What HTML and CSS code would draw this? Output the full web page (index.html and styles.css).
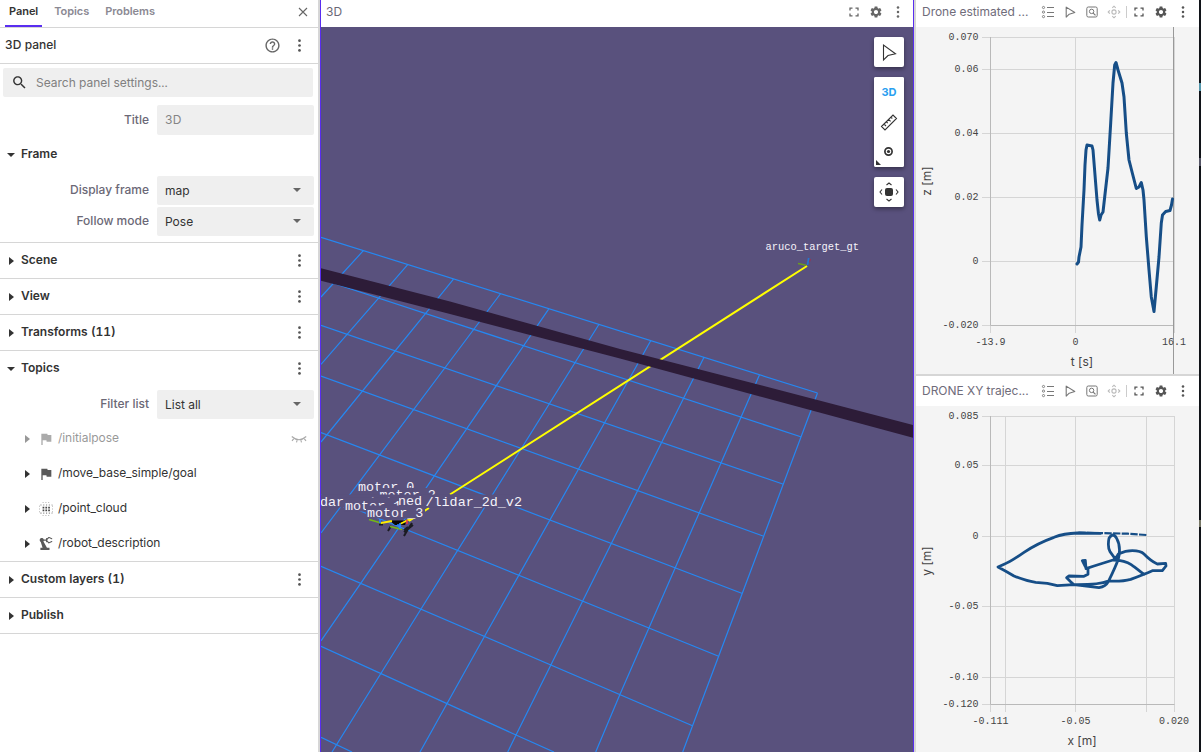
FILE: index.html
```html
<!DOCTYPE html>
<html lang="en">
<head>
<meta charset="utf-8">
<title>3D panel</title>
<link rel="stylesheet" href="styles.css">
</head>
<body>
<svg class="defs" width="0" height="0">
  <symbol id="dots" viewBox="0 0 16 16"><circle cx="8" cy="2.800" r="1.450"/><circle cx="8" cy="8" r="1.450"/><circle cx="8" cy="13.200" r="1.450"/></symbol>
  <symbol id="gear" viewBox="0 0 24 24"><path d="M19.14 12.94c.04-.3.06-.61.06-.94 0-.32-.02-.64-.07-.94l2.03-1.58c.18-.14.23-.41.12-.61l-1.92-3.32c-.12-.22-.37-.29-.59-.22l-2.39.96c-.5-.38-1.03-.7-1.62-.94l-.36-2.54c-.04-.24-.24-.41-.48-.41h-3.84c-.24 0-.43.17-.47.41l-.36 2.54c-.59.24-1.13.57-1.62.94l-2.39-.96c-.22-.08-.47 0-.59.22L2.74 8.87c-.12.21-.08.47.12.61l2.03 1.58c-.05.3-.09.63-.09.94s.02.64.07.94l-2.03 1.58c-.18.14-.23.41-.12.61l1.92 3.32c.12.22.37.29.59.22l2.39-.96c.5.38 1.03.7 1.62.94l.36 2.54c.05.24.24.41.48.41h3.84c.24 0 .44-.17.47-.41l.36-2.54c.59-.24 1.13-.56 1.62-.94l2.39.96c.22.08.47 0 .59-.22l1.92-3.32c.12-.22.07-.47-.12-.61l-2.01-1.58zM12 15.6c-1.98 0-3.6-1.62-3.6-3.6s1.62-3.6 3.6-3.6 3.6 1.62 3.6 3.6-1.62 3.6-3.6 3.6z"/></symbol>
  <symbol id="full" viewBox="0 0 14 14"><path d="M3 5.5V3.2h2.500M8.500 3.200H11v2.300M11 8.500v2.400H8.500M5.500 10.900H3V8.500" fill="none" stroke="currentColor" stroke-width="1.300"/></symbol>
  <symbol id="legend" viewBox="0 0 14 14"><g fill="none" stroke="currentColor"><path d="M6 2.500h7M6 7.500h7M6 11.500h7" stroke-width="1"/><circle cx="2.500" cy="2.500" r="1.100" stroke-width=".9"/><circle cx="2.500" cy="7.100" r="1.100" stroke-width=".9"/><circle cx="2.500" cy="11.600" r="1.100" stroke-width=".9"/></g></symbol>
  <symbol id="cursor" viewBox="0 0 14 14"><path d="M3.200 2.100v10l3-2.900 5.600-1.700z" fill="none" stroke="currentColor" stroke-width="1.100" stroke-linejoin="round"/></symbol>
  <symbol id="zoom" viewBox="0 0 14 14"><g fill="none" stroke="currentColor" stroke-width="1"><rect x="1.800" y="2" width="10.400" height="10" rx="1.500"/><circle cx="6.600" cy="6.400" r="2.200"/><path d="M8.200 8.100l2.300 2.300" stroke-width="1.200"/></g></symbol>
  <symbol id="center" viewBox="0 0 14 14"><g fill="none" stroke="currentColor" stroke-width="1.100"><circle cx="7" cy="7" r="2.100"/><path d="M5.300 2.800 7 1.200l1.700 1.600M5.300 11.200 7 12.800l1.700-1.600M2.800 5.300 1.200 7l1.600 1.700M11.200 5.300 12.800 7l-1.600 1.700"/></g></symbol>
  <symbol id="flag" viewBox="0 0 24 24"><path d="M14.400 6 14 4H5v17h2v-7h5.600l.4 2h7V6z"/></symbol>
</svg>

<div class="app">
  <aside class="sidebar">
    <nav class="tabs">
      <span class="tab active">Panel</span><span class="tab">Topics</span><span class="tab">Problems</span>
      <svg class="close" viewBox="0 0 10 10"><path d="M1 1l8 8M9 1L1 9"/></svg>
    </nav>
    <div class="panel-head"><span>3D panel</span>
      <svg class="help" viewBox="0 0 24 24"><path d="M11 18h2v-2h-2v2zm1-16C6.480 2 2 6.480 2 12s4.480 10 10 10 10-4.480 10-10S17.520 2 12 2zm0 18c-4.410 0-8-3.590-8-8s3.590-8 8-8 8 3.590 8 8-3.590 8-8 8zm0-14c-2.210 0-4 1.790-4 4h2c0-1.100.9-2 2-2s2 .9 2 2c0 2-3 1.750-3 5h2c0-2.250 3-2.500 3-5 0-2.210-1.790-4-4-4z"/></svg>
      <svg class="more"><use href="#dots"/></svg></div>
    <div class="general">
      <div class="search"><svg viewBox="0 0 24 24"><path d="M15.500 14h-.79l-.28-.27C15.410 12.590 16 11.110 16 9.500 16 5.910 13.090 3 9.500 3S3 5.910 3 9.500 5.910 16 9.500 16c1.610 0 3.090-.59 4.230-1.570l.27.28v.79l5 4.990L20.490 19l-4.990-5zm-6 0C7.010 14 5 11.990 5 9.500S7.010 5 9.500 5 14 7.010 14 9.500 11.990 14 9.500 14z"/></svg><span>Search panel settings...</span></div>
      <div class="field title-field"><label>Title</label><div class="input">3D</div></div>
      <div class="section-head open"><i class="tri down"></i><b>Frame</b></div>
      <div class="field frame-field"><label>Display frame</label><div class="select">map<i></i></div></div>
      <div class="field"><label>Follow mode</label><div class="select">Pose<i></i></div></div>
    </div>
    <div class="section-head"><i class="tri"></i><b>Scene</b><svg class="more"><use href="#dots"/></svg></div>
    <div class="section-head"><i class="tri"></i><b>View</b><svg class="more"><use href="#dots"/></svg></div>
    <div class="section-head"><i class="tri"></i><b>Transforms (11)</b><svg class="more"><use href="#dots"/></svg></div>
    <div class="topics">
      <div class="section-head open"><i class="tri down"></i><b>Topics</b><svg class="more"><use href="#dots"/></svg></div>
      <div class="field frame-field"><label>Filter list</label><div class="select">List all<i></i></div></div>
      <div class="topic off"><i class="tri"></i><svg><use href="#flag"/></svg><span>/initialpose</span>
        <svg class="eye" viewBox="0 0 16 8"><path d="M.8 1.500Q8 8 15.200 1.500M3 3.300 1 5.800M6.200 4.900 5.500 7.300M9.800 4.900l.7 2.400M13 3.300l2 2.500"/></svg></div>
      <div class="topic"><i class="tri"></i><svg><use href="#flag"/></svg><span>/move_base_simple/goal</span></div>
      <div class="topic"><i class="tri"></i><svg viewBox="0 0 16 16"><g class="grain"><path class="g1" d="M4.600 1.500h8M4.600 14.500h8M1 5.200h1M1 8h1M1 10.800h1M14 5.200h1M14 8h1M14 10.800h1"/><path class="g2" d="M2.400 4h12M2.400 12.200h12"/><path class="g3" d="M4.600 6.700h8M4.600 9.400h8"/></g></svg><span>/point_cloud</span></div>
      <div class="topic"><i class="tri"></i><svg class="arm" viewBox="2 3 20 19"><path d="M19.930 8.350l-3.600 1.680L14 7.700V6.300l2.330-2.330 3.600 1.680c.38.18.82.01 1-.36.18-.38.01-.82-.36-1l-3.920-1.830c-.38-.18-.83-.1-1.130.2L13.780 4.400c-.18-.24-.46-.4-.78-.4-.55 0-1 .45-1 1v1H8.820C8.340 4.650 6.980 3.730 5.400 4.070c-1.160.25-2.150 1.250-2.360 2.430-.22 1.320.46 2.470 1.480 3.080L7.080 18H4v3h13v-3h-3.620L8.410 8.770c.17-.24.31-.49.41-.77H12v1c0 .55.45 1 1 1 .32 0 .6-.16.78-.4l1.740 1.740c.3.3.75.38 1.130.2l3.920-1.830c.38-.18.54-.62.36-1-.18-.37-.62-.54-1-.36z"/></svg><span>/robot_description</span></div>
    </div>
    <div class="section-head"><i class="tri"></i><b>Custom layers (1)</b><svg class="more"><use href="#dots"/></svg></div>
    <div class="section-head"><i class="tri"></i><b>Publish</b></div>
  </aside>

  <main class="viewer">
    <header class="bar"><span>3D</span><svg><use href="#full"/></svg><svg><use href="#gear"/></svg><svg><use href="#dots"/></svg></header>
    <div class="scene">
      <svg class="world" viewBox="321 27 592 725">
        <path class="grid" d="M321 237.300 817.500 393M321 279.200 800.700 436.700M321 325.300 782.700 484M321 376 763 536M321 432.500 741.700 593.300M321 495 718 656M321 566.300 692.500 725.700M321 646.300 516 735 554 752M321 737.400 352 752
        M817.500 393 682.700 752M759.300 375.300 620 694.300 595.700 752M704 357.300 516 735 507.700 752M650.700 340.700 484.700 636 420 752M598.700 324.700 421 609 332 752M549 308.700 360.700 583.300 321 640.800M500.300 294 362 478.300 321 533M453.300 279.300 321 442M407.700 264.700 321 364.300M363.300 250.700 321 297"/>
        <path class="yellow" d="M807 266 450 494.500M429 508l-20 13"/>
        <path class="band" d="M321 268.300 450 301.500 620 349 760 385 913 425V437.700L760 396.500 620 358.500 450 314 321 280.700z"/>
        <g fill="none">
          <path d="M798 263.500l8 1.800" stroke="#6b9c20" stroke-width="1.500"/><path d="M807.500 265l1.200-7" stroke="#2575d0" stroke-width="1.700"/><path d="M809.500 262l1-3" stroke="#a0304c"/>
          <path d="M388 531l3-5M404 536l4-7 4-6M404 532l9-7M408 527l-4 3M379 524.500h4" stroke="#1b1b22" stroke-width="2"/>
          <path d="M391 521h14v3.500h-10z" fill="#080808" stroke="#080808"/>
          <path d="M369 519.500l12 3.500M390 526.500l12 3" stroke="#74b816" stroke-width="1.600"/>
          <path d="M381 523l11-2M400 524l12-6 2-2" stroke="#ffec00" stroke-width="1.800"/>
          <path d="M380 519v4M400 523v6M397 525h3" stroke="#2880ff" stroke-width="1.600"/><path d="M407 520v4" stroke="#ee3048" stroke-width="1.500"/>
        </g>
        <g class="labels">
          <text x="358" y="490.700">motor_0</text>
          <rect x="378" y="488" width="58" height="14"/><text x="379.500" y="499">motor_2</text>
          <rect x="321" y="494.500" width="202" height="13"/><text x="320" y="505.700">dar_</text><text x="368.500" y="505.700">i i</text><text x="398" y="504.700">ned</text><text x="425.500" y="505.700">/lidar_2d_v2</text>
          <rect x="344" y="497.500" width="55" height="14"/><text x="345" y="509.500">motor_1</text>
          <rect x="366" y="505.500" width="59" height="13"/><text x="367" y="517">motor_3</text>
        </g>
        <text class="target" x="765.500" y="249.700">aruco_target_gt</text>
      </svg>
      <div class="tools">
        <div class="tool"><svg viewBox="0 0 20 20"><path class="line" d="M4.500 3v15l4.500-4.500 7.500-1.800z"/></svg></div>
        <div class="tool-group">
          <div class="tool mode">3D</div>
          <div class="tool"><svg viewBox="0 0 20 20"><path class="line" d="M2.500 14.500 14 3l3.500 3.500L6 18zM5 12l2 2M7.300 9.700l1.400 1.400M9.600 7.400l2 2M11.900 5.100l1.400 1.400"/></svg></div>
          <div class="tool"><svg viewBox="0 0 20 20"><circle cx="9.500" cy="9.500" r="3.600" fill="none" stroke="#333" stroke-width="1.700"/><circle cx="9.500" cy="9.500" r="1.600"/></svg></div>
          <i class="corner"></i>
        </div>
        <div class="tool"><svg viewBox="0 0 20 20"><rect x="6" y="6" width="8" height="8" rx="2"/><path class="line" d="M7.500 3 10 1l2.500 2M7.500 17l2.500 2 2.500-2M3 7.500 1 10l2 2.500M17 7.500l2 2.500-2 2.500"/></svg></div>
      </div>
    </div>
  </main>

  <section class="plots">
    <div class="plot first">
      <header class="bar"><span>Drone estimated ...</span><svg><use href="#legend"/></svg><svg><use href="#cursor"/></svg><svg><use href="#zoom"/></svg><svg class="faint"><use href="#center"/></svg><i></i><svg class="dark"><use href="#full"/></svg><svg class="dark"><use href="#gear"/></svg><svg class="dark"><use href="#dots"/></svg></header>
      <svg class="chart" viewBox="916 27 283 347">
        <path class="rule" d="M982 37.500h192M982 69.500h192M982 133.500h192M982 197.500h192M982 261.500h192M982 325.500h8M1075.500 37v296M990.500 325v8M1174.500 37v296"/>
        <path class="axis" d="M990.500 37v288.500h183"/><path class="now" d="M1173.500 27v347"/>
        <g class="ticks end"><text x="978.500" y="40">0.070</text><text x="978.500" y="72">0.06</text><text x="978.500" y="136">0.04</text><text x="978.500" y="200">0.02</text><text x="978.500" y="264">0</text><text x="978.500" y="328">-0.020</text></g>
        <g class="ticks mid"><text x="990.500" y="345">-13.9</text><text x="1075.500" y="345">0</text><text x="1174" y="345">16.1</text></g>
        <text class="axis-name" x="1082" y="366">t [s]</text><text class="axis-name" transform="translate(931 181)rotate(-90)">z [m]</text>
        <path class="series" d="M1077 264 1078.500 262 1079 257 1081 247 1082 225 1084 190 1085 165 1086 150 1087 145 1092 146 1093 150 1095 175 1097 200 1098.500 214 1099.700 220 1101 215 1103 212 1104.700 197 1108 168 1110.700 123 1113 83 1114.700 65 1116 62.500 1118 70 1122 83 1124 97 1126.300 133 1129 160 1132.300 173 1136.300 188.500 1139 187 1141.300 182.500 1143 190 1144 200 1146.300 236.700 1149 270 1151.300 297 1154 311.500 1156 290 1159 257 1161.300 223 1162.500 215 1165.700 211.500 1170 210.500 1171.500 205 1172.500 199"/>
      </svg>
    </div>
    <div class="plot second">
      <header class="bar"><span>DRONE XY trajec...</span><svg><use href="#legend"/></svg><svg><use href="#cursor"/></svg><svg><use href="#zoom"/></svg><svg class="faint"><use href="#center"/></svg><i></i><svg class="dark"><use href="#full"/></svg><svg class="dark"><use href="#gear"/></svg><svg class="dark"><use href="#dots"/></svg></header>
      <svg class="chart" viewBox="916 406 283 346">
        <path class="rule" d="M982 416.500h192M982 465.500h192M982 536.500h192M982 606.500h192M982 677.500h192M982 704.500h8M1005.500 416v296M1075.500 416v296M1146.500 416v296M990.500 704v8M1174.500 416v296"/>
        <path class="axis" d="M990.500 416v288.500h184"/>
        <g class="ticks end"><text x="978.500" y="419">0.085</text><text x="978.500" y="468">0.05</text><text x="978.500" y="539">0</text><text x="978.500" y="609">-0.05</text><text x="978.500" y="680">-0.10</text><text x="978.500" y="707">-0.120</text></g>
        <g class="ticks mid"><text x="990.500" y="724">-0.111</text><text x="1075.500" y="724">-0.05</text><text x="1174" y="724">0.020</text></g>
        <text class="axis-name" x="1082" y="745">x [m]</text><text class="axis-name" transform="translate(931 561)rotate(-90)">y [m]</text>
        <g transform="translate(914 380)scale(.33333)">
          <path class="series wide thin" d="M697 465 640 461 590 460 490 458"/>
          <path class="series wide" d="M560 460 490 459Q450 460 420 472 370 490 330 517 290 545 272 552L252 561Q275 573 300 588 335 603 365 607L400 610 430 617 480 614 555 623Q575 620 583 605 605 560 613 537 622 500 608 475 597 455 585 475 580 500 588 515L604 537 613 522Q635 512 655 512 680 512 690 522 710 543 730 552L755 550 756 558 745 572 715 572Q690 583 650 598 625 605 583 603 555 615 480 614L470 605 458 593 465 588 510 589 522 583 522 567 514 560 505 542 514 541 516 566 540 558 597 540 615 541Q645 546 660 560L690 583"/>
        </g>
      </svg>
    </div>
  </section>
  <div class="edge"></div>
</div>
</body>
</html>
```

FILE: styles.css
```css
* { box-sizing: border-box; }
body { margin: 0; font-family: Inter, sans-serif; font-size: 12px; color: #333; background: #fff; overflow: hidden; }
.defs { position: absolute; }
svg { fill: currentColor; flex: none; }
.app { display: grid; grid-template-columns: 320px 594px 285px 2px; height: 752px; background: #d6d6d6; }
.sidebar { background: #fff; border-right: 2px solid #d6d6d6; font-feature-settings: "tnum"; }
.tabs { display: flex; height: 28px; padding-left: 5px; border-bottom: 1px solid #d6d6d6; font-size: 11px; font-weight: 600; letter-spacing: -0.05px; color: #8b8993; }
.tab { height: 27px; line-height: 23px; padding: 0 4px; margin-right: 8px; }
.active { color: #333; border-bottom: 2px solid #592df0; }
.close { width: 10px; height: 10px; margin: 7px 10px 0 auto; stroke: #666; stroke-width: 1.1; fill: none; }
.panel-head { display: flex; align-items: center; height: 36px; padding: 0 11px 1px 5px; border-bottom: 1px solid #d6d6d6; font-weight: 500; }
.panel-head span { padding-bottom: 2px; }
.panel-head .help { width: 17px; height: 17px; margin-left: auto; margin-right: 11px; color: #666; }
.more { width: 15px; height: 15px; color: #555; }
.general { height: 179px; padding-top: 4px; border-bottom: 1px solid #d6d6d6; }
.search { display: flex; align-items: center; width: 310px; height: 29px; margin-left: 3px; padding-left: 8px; border-radius: 2px; background: #efefef; color: #808080; }
.search svg { width: 17px; height: 17px; margin-right: 8px; color: #333; }
.field { display: grid; grid-template-columns: 149px 157px; column-gap: 8px; align-items: center; height: 29px; margin-top: 2px; }
.field label { text-align: right; color: #6b6876; font-weight: 500; padding-bottom: 2px; }
.title-field { height: 30px; margin-top: 8px; }
.frame-field { margin-top: 4px; }
.input, .select { display: flex; align-items: center; height: 100%; padding: 0 13px 1px 8px; background: #efefef; border-radius: 2px; }
.input { color: #858585; padding-bottom: 2px; }
.select i { margin-left: auto; border: 4.5px solid transparent; border-top-color: #666; border-bottom: 0; }
.section-head { display: flex; align-items: center; height: 36px; padding: 0 11px 1px 9px; border-bottom: 1px solid #d6d6d6; }
.section-head b { font-weight: 600; padding-bottom: 2px; }
.section-head .more { margin-left: auto; }
.open { border-bottom: 0; margin-top: 1px; padding-bottom: 0; }
.tri { width: 12px; flex: none; display: block; }
.tri::before { content: ""; display: block; width: 0; border: 4px solid transparent; border-left: 5px solid #333; border-right: 0; margin-top: 1px; }
.tri.down::before { border: 4.5px solid transparent; border-top: 4.5px solid #333; border-bottom: 0; margin-left: -2px; }
.topics { height: 211px; border-bottom: 1px solid #d6d6d6; }
.topics .open { height: 35px; margin-top: 0; }
.topics .frame-field { margin-bottom: 2px; }
.topic { display: flex; align-items: center; height: 35px; padding: 0 11px 0 25px; }
.topic span { padding-bottom: 2px; letter-spacing: -0.06px; }
.topic svg { width: 16px; height: 16px; margin: 0 4px 0 1px; color: #595959; }
.topic .arm { width: 14px; height: 14px; margin: 1px 5px 0 2px; }
.off { opacity: .5; }
.topic .eye { width: 16px; height: 8px; margin: 1px 0 0 auto; fill: none; stroke: #555; stroke-width: 1.1; }
.grain path { fill: none; stroke: #aaa; }
.grain .g1 { stroke-width: .9; stroke-dasharray: 1 1.8; }
.grain .g2 { stroke: #888; stroke-width: 1.2; stroke-dasharray: 1.1 1.7; }
.grain .g3 { stroke: #444; stroke-width: 1.7; stroke-dasharray: 1.7 1.1; }

.bar { display: flex; align-items: center; background: #fff; color: #6b6876; }
.bar span { margin-right: auto; padding-bottom: 1px; }
.bar svg { width: 22px; height: 14px; }
.bar i { width: 1px; height: 12px; margin: 0 1px; background: #ccc; }
.bar .dark { color: #555; }
.bar .faint { opacity: .5; }
.viewer { border-left: 1px solid #592df0; border-right: 1px solid #592df0; background: #59517d; }
.viewer .bar { height: 27px; padding: 0 4px 3px 5px; }
.viewer .bar svg { color: #666; }
.scene { position: relative; height: 725px; }
.world { display: block; width: 592px; height: 725px; }
.grid { fill: none; stroke: #2588f2; stroke-width: 1.2; }
.yellow { fill: none; stroke: #ff0; stroke-width: 2; }
.band { fill: #2d1c38; }
.labels { font: 13.4px "Liberation Mono", monospace; fill: #f5f3fa; }
.labels rect { fill: #59517d; }
.target { font: 10.4px "Liberation Mono", monospace; fill: #f5f3fa; }
.tools { position: absolute; top: 10px; right: 9px; display: flex; flex-direction: column; gap: 10px; color: #333; }
.tool { width: 30px; height: 30px; background: #fff; display: grid; place-items: center; border-radius: 2px; }
.tools > div { box-shadow: 0 2px 4px #0006; border-radius: 2px; }
.tool svg { width: 20px; height: 20px; }
.line { fill: none; stroke: #333; stroke-width: 1.1; }
.mode { color: #2a9ff0; font-weight: 700; font-size: 11px; }
.tool-group { position: relative; background: #fff; }
.corner { position: absolute; left: 2px; bottom: 2px; border-bottom: 5px solid #333; border-right: 5px solid transparent; }

.plots { padding-left: 2px; display: grid; grid-template-rows: 374px 376px; row-gap: 2px; }
.plot { background: #f4f4f4; }
.plot .bar { padding: 0 5px 0 6px; height: 30px; color: #777; }
.plot .bar span { color: #6f6c7a; letter-spacing: -0.03px; }
.first .bar { height: 27px; padding-bottom: 3px; }
.chart { display: block; width: 283px; }
.rule, .axis, .now { fill: none; stroke: #d5d5d5; stroke-width: 1; }
.axis { stroke: #b9b9b9; }
.now { stroke: #999; }
.ticks { font: 10px "Liberation Mono", monospace; fill: #444; }
.end { text-anchor: end; }
.mid, .axis-name { text-anchor: middle; }
.axis-name { font-size: 12px; fill: #444; }
.series { fill: none; stroke: #164e87; stroke-width: 3; stroke-linejoin: round; stroke-linecap: round; }
.wide { stroke-width: 8.3; }
.thin { stroke-width: 6.5; stroke-dasharray: 22 4; stroke-linecap: butt; }
.edge { background: linear-gradient(#101318 83px, #5598ad 83px 91px, #101318 91px 158px, #556 158px 166px, #101318 166px 520px, #776 520px 527px, #101318 527px); }
```
